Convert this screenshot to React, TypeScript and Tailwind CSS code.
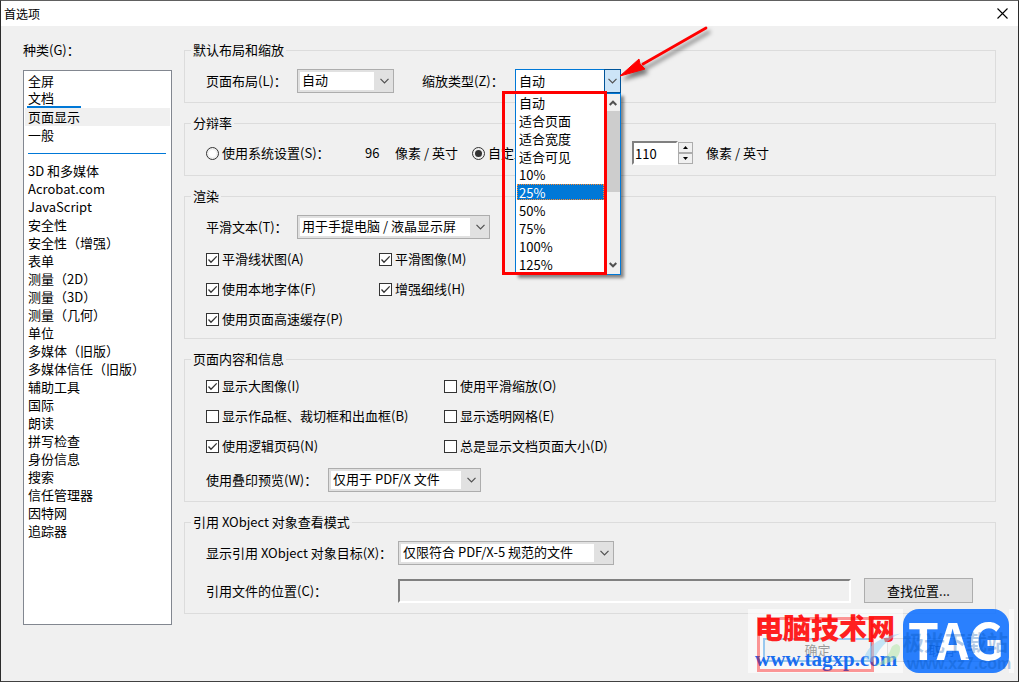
import { useState } from "react";
import type { ReactNode } from "react";
import clsx from "clsx";

const mainCategories = ["全屏", "文档", "页面显示", "一般"];

const otherCategories = [
    "3D 和多媒体",
    "Acrobat.com",
    "JavaScript",
    "安全性",
    "安全性（增强）",
    "表单",
    "测量（2D）",
    "测量（3D）",
    "测量（几何）",
    "单位",
    "多媒体（旧版）",
    "多媒体信任（旧版）",
    "辅助工具",
    "国际",
    "朗读",
    "拼写检查",
    "身份信息",
    "搜索",
    "信任管理器",
    "因特网",
    "追踪器",
];

const zoomLevels = ["自动", "适合页面", "适合宽度", "适合可见", "10%", "25%", "50%", "75%", "100%", "125%"];

function Chevron({ className }: { className?: string }) {
    return (
        <svg viewBox="0 0 9 6" className={clsx("h-[6px] w-[9px]", className)} fill="none" stroke="#505050" strokeWidth="1.2" aria-hidden="true">
            <path d="M0.5 0.8 L4.5 4.8 L8.5 0.8" />
        </svg>
    );
}

type GroupProps = {
    title: string;
    className?: string;
    children: ReactNode;
};

function Group({ title, className, children }: GroupProps) {
    return (
        <fieldset className={clsx("min-w-0 border border-[#dcdcdc] pl-[21px]", className)}>
            <legend className="-ml-[15px] px-[2px]">{title}</legend>
            {children}
        </fieldset>
    );
}

type SelectProps = {
    id: string;
    options: string[];
    className?: string;
};

function Select({ id, options, className }: SelectProps) {
    return (
        <div className={clsx("flex h-6 items-center border border-[#adadad] bg-[#e1e1e1] pl-[2px]", className)}>
            <select id={id} className="h-[18px] min-w-0 flex-1 appearance-none bg-white pb-[2px] pl-[2px] leading-4 outline-none">
                {options.map((option) => (
                    <option key={option}>{option}</option>
                ))}
            </select>
            <Chevron className="mr-1 ml-[6px]" />
        </div>
    );
}

type CheckProps = {
    label: string;
    checked?: boolean;
    className?: string;
};

function Check({ label, checked = false, className }: CheckProps) {
    const [on, setOn] = useState(checked);

    return (
        <label className={clsx("flex h-[30px] items-center gap-[3px] whitespace-nowrap", className)}>
            <span className="grid h-[13px] w-[13px] shrink-0">
                <input
                    type="checkbox"
                    checked={on}
                    onChange={() => setOn(!on)}
                    className="col-start-1 row-start-1 h-[13px] w-[13px] appearance-none border border-[#333333] bg-white"
                />
                {on && (
                    <svg viewBox="0 0 13 13" className="pointer-events-none col-start-1 row-start-1" fill="none" stroke="#333333" strokeWidth="1.3" aria-hidden="true">
                        <path d="M2.5 6.5 L5 9.2 L10.7 3.4" />
                    </svg>
                )}
            </span>
            {label}
        </label>
    );
}

type RadioProps = {
    label: string;
    checked: boolean;
    onChange: () => void;
    className?: string;
};

function Radio({ label, checked, onChange, className }: RadioProps) {
    return (
        <label className={clsx("flex items-center gap-[3px] whitespace-nowrap", className)}>
            <input
                type="radio"
                name="resolution"
                checked={checked}
                onChange={onChange}
                className="h-[13px] w-[13px] shrink-0 appearance-none rounded-full border border-[#333333] bg-white bg-clip-content p-[2px] checked:bg-[#333333]"
            />
            {label}
        </label>
    );
}

function ZoomDropdown() {
    const [active, setActive] = useState("25%");

    return (
        <div className="relative w-[106px]">
            <button id="zoom-type" className="flex h-6 w-full border border-[#0078d7] bg-white text-left leading-[22px]">
                <span className="flex-1 pl-[3px]">自动</span>
                <span className="-my-px -mr-px flex h-6 w-[17px] items-center justify-center border border-[#005499] bg-[#cce4f7]">
                    <Chevron />
                </span>
            </button>
            <div className="absolute top-6 left-0 z-10 flex w-full border border-[#0078d7] bg-white shadow-[3px_3px_3px_rgba(0,0,0,0.45)]">
                <ul className="flex-1 pl-px">
                    {zoomLevels.map((level) => (
                        <li key={level} className="h-[18px]">
                            <button
                                onClick={() => setActive(level)}
                                className={clsx(
                                    "block h-4 w-[87px] pl-[2px] text-left leading-[18px]",
                                    level === active && "bg-[#0078d7] text-white outline-1 -outline-offset-1 outline-dotted outline-[#ff8728]"
                                )}
                            >
                                {level}
                            </button>
                        </li>
                    ))}
                </ul>
                <div className="flex w-[15px] flex-col items-center bg-[#f0f0f0] py-[6px]">
                    <svg viewBox="0 0 8 6" className="h-[6px] w-2" fill="none" stroke="#505050" strokeWidth="2" aria-hidden="true">
                        <path d="M0.7 5 L4 1.7 L7.3 5" />
                    </svg>
                    <div className="mt-[5px] h-[81px] w-full bg-[#cdcdcd]" />
                    <svg viewBox="0 0 8 6" className="mt-auto h-[6px] w-2" fill="none" stroke="#505050" strokeWidth="2" aria-hidden="true">
                        <path d="M0.7 1 L4 4.3 L7.3 1" />
                    </svg>
                </div>
            </div>
            <div className="pointer-events-none absolute top-[22px] -left-[13px] z-20 h-[184px] w-[105px] border-3 border-[#ff0000]" />
            <svg viewBox="0 0 100 70" className="pointer-events-none absolute -top-[49px] left-[103px] z-20 h-[70px] w-[100px] drop-shadow-[3px_4px_2px_rgba(0,0,0,0.5)]" aria-hidden="true">
                <path d="M88 8 L25 44" stroke="#ff0000" strokeWidth="2.8" strokeLinecap="round" />
                <path d="M2 56 L21 39 L22 44 L27 49 Z" fill="#ff0000" stroke="#ff0000" strokeWidth="1" />
            </svg>
        </div>
    );
}

function Watermark() {
    return (
        <div className="pointer-events-none absolute right-1 bottom-2 flex h-16 w-[266px]">
            <div className="flex w-[155px] flex-col bg-white/60 pl-[7px]">
                <div className="text-[28px] leading-9 font-black whitespace-nowrap text-[#ff2020]">电脑技术网</div>
                <div className="font-['Liberation_Serif',serif] text-[21px] leading-7 font-bold text-[#1a6df0]">www.tagxp.com</div>
            </div>
            <div className="flex w-[106px] justify-center rounded-2xl bg-[#1473ff]/90 text-[50px] leading-[58px] font-bold text-white">TAG</div>
            <div className="w-[5px] bg-white/60" />
            <div className="absolute top-2 left-[9px] h-[55px] w-[117px] border-3 border-[#ff0000]/40" />
            <svg viewBox="0 0 50 50" className="absolute top-5 left-[112px] h-11 w-12 opacity-50" aria-hidden="true">
                <path d="M2 33 Q10 10 44 5 Q22 14 12 38 Z" fill="#8fd0f5" />
                <path d="M14 42 Q30 34 34 20 Q40 14 43 20 Q46 38 14 42 Z" fill="#b0e6a5" />
            </svg>
            <div className="absolute top-[18px] left-[155px] flex flex-col text-[#0050b0]/30">
                <span className="text-[21px] leading-7 font-bold whitespace-nowrap">极光下载站</span>
                <span className="pl-1 font-['Liberation_Sans',sans-serif] text-[16px] leading-[18px] font-bold whitespace-nowrap">www.xz7.com</span>
            </div>
        </div>
    );
}

export default function App() {
    const [category, setCategory] = useState("页面显示");
    const [resolution, setResolution] = useState("custom");

    const categoryItem = (name: string) => (
        <li key={name}>
            <button
                onClick={() => setCategory(name)}
                className={clsx("block h-[18px] w-full pl-[3px] text-left leading-4 whitespace-nowrap", name === category && "bg-[#f0f0f0]")}
            >
                {name === "文档" ? <span className="-ml-px block h-[18px] w-[54px] border-b-2 border-[#0078d7] pl-px">{name}</span> : name}
            </button>
        </li>
    );

    return (
        <div className="relative flex min-h-screen flex-col overflow-hidden border border-t-[#606060] border-r-[#2b2b2b] border-b-[#404040] border-l-[#2b2b2b] bg-[#f0f0f0] font-['Noto_Sans_CJK_SC',sans-serif] text-[13px] leading-[18px] text-black">
            <header className="flex h-[25px] items-center justify-between bg-white pr-[10px] pl-[3px]">
                <h1 className="text-[12px] leading-[22px]">首选项</h1>
                <button aria-label="关闭">
                    <svg viewBox="0 0 11 11" className="h-[11px] w-[11px]" stroke="#000000" strokeWidth="1.1" aria-hidden="true">
                        <path d="M0.5 0.5 L10.5 10.5 M10.5 0.5 L0.5 10.5" />
                    </svg>
                </button>
            </header>

            <main className="flex flex-1 gap-3 pt-[15px] pr-[22px] pl-[22px]">
                <nav className="flex w-[149px] shrink-0 flex-col gap-[11px]">
                    <h2>种类(G)：</h2>
                    <div className="flex-1 border border-[#828790] bg-white p-px">
                        <ul>{mainCategories.map(categoryItem)}</ul>
                        <div className="flex h-[18px] items-center pr-1 pl-[3px]">
                            <div role="separator" className="h-px w-full bg-[#0078d7]" />
                        </div>
                        <ul>{otherCategories.map(categoryItem)}</ul>
                    </div>
                </nav>

                <div className="flex min-w-0 flex-1 flex-col gap-[11px]">
                    <Group title="默认布局和缩放" className="pt-[10px] pb-[9px]">
                        <div className="flex items-center">
                            <label htmlFor="page-layout" className="w-[91px]">页面布局(L)：</label>
                            <Select id="page-layout" options={["自动", "单页", "双联"]} className="w-[97px]" />
                            <label htmlFor="zoom-type" className="ml-7 w-[93px]">缩放类型(Z)：</label>
                            <ZoomDropdown />
                        </div>
                    </Group>

                    <Group title="分辩率" className="pt-[9px] pb-[10px]">
                        <div className="flex h-6 items-center whitespace-nowrap">
                            <Radio
                                label="使用系统设置(S)："
                                checked={resolution === "system"}
                                onChange={() => setResolution("system")}
                                className="w-[159px]"
                            />
                            <span className="w-[30px]">96</span>
                            <span className="w-[77px]">像素 / 英寸</span>
                            <Radio
                                label="自定义分辩率(E)："
                                checked={resolution === "custom"}
                                onChange={() => setResolution("custom")}
                                className="w-40"
                            />
                            <input
                                aria-label="自定义分辩率"
                                defaultValue="110"
                                className="h-6 w-[46px] border-2 border-t-[#808080] border-r-white border-b-white border-l-[#808080] bg-white pl-px outline-none"
                            />
                            <div className="flex flex-col">
                                {["M0 3 L2.5 0 L5 3 Z", "M0 0 L2.5 3 L5 0 Z"].map((d, i) => (
                                    <button
                                        key={d}
                                        aria-label={i === 0 ? "增加" : "减少"}
                                        className="flex h-[11px] w-[15px] items-center justify-center border border-[#acacac] bg-[#f0f0f0]"
                                    >
                                        <svg viewBox="0 0 5 3" className="h-[3px] w-[5px]" aria-hidden="true">
                                            <path d={d} />
                                        </svg>
                                    </button>
                                ))}
                            </div>
                            <span className="ml-[13px]">像素 / 英寸</span>
                        </div>
                    </Group>

                    <Group title="渲染" className="pt-[10px] pb-1">
                        <div className="flex items-center">
                            <label htmlFor="smooth-text" className="w-[91px]">平滑文本(T)：</label>
                            <Select id="smooth-text" options={["用于手提电脑 / 液晶显示屏", "无"]} className="w-[193px]" />
                        </div>
                        <div className="mt-[5px] grid grid-cols-[173px_1fr]">
                            <Check label="平滑线状图(A)" checked />
                            <Check label="平滑图像(M)" checked />
                            <Check label="使用本地字体(F)" checked />
                            <Check label="增强细线(H)" checked />
                            <Check label="使用页面高速缓存(P)" checked />
                        </div>
                    </Group>

                    <Group title="页面内容和信息" className="pt-[3px] pb-[9px]">
                        <div className="grid grid-cols-[238px_1fr]">
                            <Check label="显示大图像(I)" checked />
                            <Check label="使用平滑缩放(O)" />
                            <Check label="显示作品框、裁切框和出血框(B)" />
                            <Check label="显示透明网格(E)" />
                            <Check label="使用逻辑页码(N)" checked />
                            <Check label="总是显示文档页面大小(D)" />
                        </div>
                        <div className="mt-[7px] flex items-center">
                            <label htmlFor="overprint" className="w-[122px]">使用叠印预览(W)：</label>
                            <Select id="overprint" options={["仅用于 PDF/X 文件", "从不", "总是"]} className="w-[153px]" />
                        </div>
                    </Group>

                    <Group title="引用 XObject 对象查看模式" className="pt-[10px] pr-[22px] pb-[10px]">
                        <div className="flex items-center">
                            <label htmlFor="xobject-target" className="w-48 whitespace-nowrap">显示引用 XObject 对象目标(X)：</label>
                            <Select id="xobject-target" options={["仅限符合 PDF/X-5 规范的文件", "从不", "总是"]} className="w-[216px]" />
                        </div>
                        <div className="mt-[13px] flex items-center">
                            <label htmlFor="file-location" className="w-48 shrink-0">引用文件的位置(C)：</label>
                            <input
                                id="file-location"
                                className="h-6 min-w-0 flex-1 border-2 border-t-[#808080] border-r-white border-b-white border-l-[#808080] bg-[#f0f0f0] px-1 outline-none"
                            />
                            <button className="ml-[13px] h-[25px] w-[109px] border border-[#adadad] bg-[#e1e1e1]">查找位置...</button>
                        </div>
                    </Group>
                </div>
            </main>

            <footer className="flex justify-end gap-[15px] pt-[13px] pr-[22px] pb-[19px]">
                <button className="h-6 w-[109px] border-2 border-[#0078d7] bg-[#e1e1e1] leading-5">确定</button>
                <button className="h-6 w-[109px] border border-[#adadad] bg-[#e1e1e1] leading-5">取消</button>
            </footer>
            <Watermark />
        </div>
    );
}
